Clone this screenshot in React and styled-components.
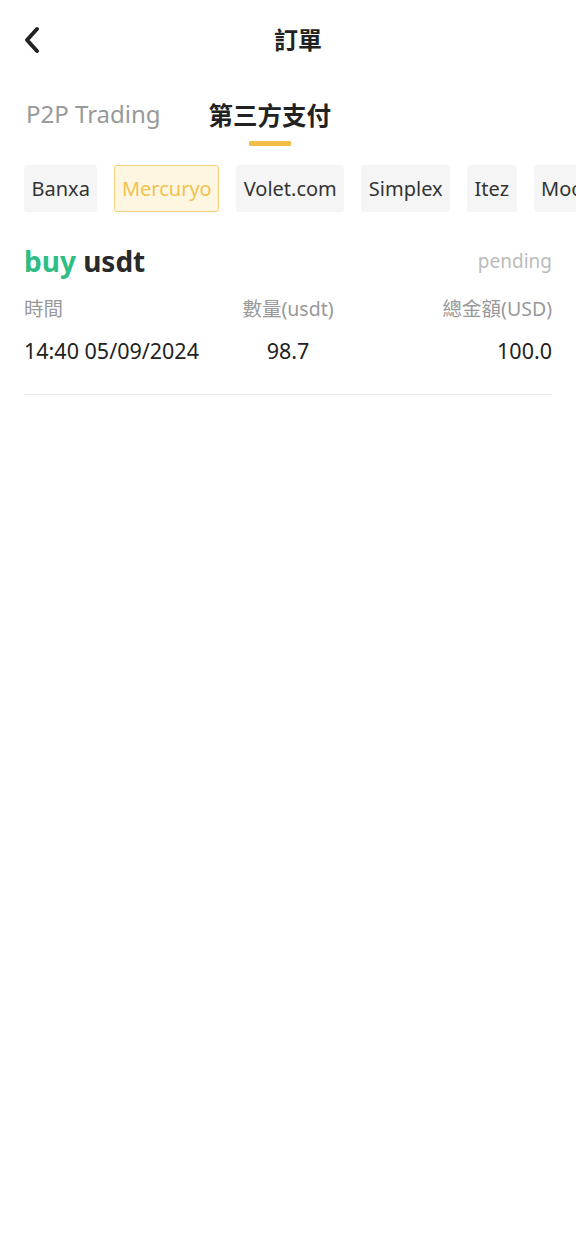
import styled, { createGlobalStyle } from "styled-components";

const GlobalStyle = createGlobalStyle`
  html, body {
    margin: 0;
    padding: 0;
    background: #fff;
  }
  body {
    font-family: "Noto Sans", "Noto Sans CJK TC", sans-serif;
    color: #222;
  }
`;

const Page = styled.div`
  width: 576px;
  min-height: 1234px;
  background: #fff;
  overflow: hidden;
`;

const NavBar = styled.div`
  height: 80px;
  display: grid;
  grid-template-columns: 60px 1fr 60px;
  align-items: center;
  padding: 0 0 0 16px;
  box-sizing: border-box;
`;

const BackButton = styled.button`
  width: 32px;
  height: 32px;
  padding: 0;
  border: 0;
  background: none;
  display: flex;
  align-items: center;
  justify-content: center;
`;

const Title = styled.h1`
  margin: 0 0 4px;
  text-align: center;
  font-size: 24px;
  font-weight: 700;
  color: #222;
  padding-left: 4px;
`;

const Tabs = styled.div`
  display: flex;
  gap: 48px;
  padding: 0 26px;
  height: 76px;
`;

const Tab = styled.div`
  display: flex;
  flex-direction: column;
  align-items: center;
  padding-top: 17px;
  font-size: ${(p) => (p.$active ? "24.5px" : "24px")};
  font-weight: ${(p) => (p.$active ? 600 : 400)};
  color: ${(p) => (p.$active ? "#222" : "#999")};
  &::after {
    content: "";
    width: 42px;
    height: 5px;
    margin-top: 9px;
    border-radius: 1px;
    background: ${(p) => (p.$active ? "#f3be47" : "transparent")};
  }
`;

const Chips = styled.div`
  display: flex;
  gap: 17px;
  padding: 9px 0 0 24px;
  overflow: hidden;
  white-space: nowrap;
`;

const Chip = styled.div`
  flex: none;
  height: 47px;
  padding: 0 6.5px;
  box-sizing: border-box;
  display: flex;
  align-items: center;
  border-radius: 3px;
  font-size: 20px;
  background: ${(p) => (p.$active ? "#fef6e0" : "#f5f5f5")};
  border: 1px solid ${(p) => (p.$active ? "#f2d27e" : "#f5f5f5")};
  color: ${(p) => (p.$active ? "#f0c24e" : "#333")};
`;

const Order = styled.div`
  margin: 0 24px;
  padding: 30px 0 29px;
  border-bottom: 1px solid #eee;
`;

const OrderHead = styled.div`
  display: flex;
  justify-content: space-between;
  align-items: center;
  margin-bottom: 13px;
`;

const OrderTitle = styled.div`
  font-size: 28px;
  font-weight: 700;
  color: #2a2a2a;
  span {
    color: #2ebd85;
  }
`;

const Status = styled.div`
  font-size: 19px;
  color: #bbb;
`;

const Grid = styled.div`
  display: grid;
  grid-template-columns: 1fr 1fr 1fr;
  row-gap: 14px;
  align-items: center;
`;

const Cell = styled.div`
  font-size: ${(p) => (p.$label ? "19.5px" : "21.5px")};
  color: ${(p) => (p.$label ? "#999" : "#222")};
  text-align: ${(p) => p.$align || "left"};
  white-space: nowrap;
`;

export default function App() {
  return (
    <Page>
      <GlobalStyle />
      <NavBar>
        <BackButton aria-label="back">
          <svg width="20" height="28" viewBox="0 0 20 28">
            <path
              d="M15 3 L5 14 L15 25"
              fill="none"
              stroke="#222"
              strokeWidth="4"
              strokeLinecap="round"
              strokeLinejoin="round"
            />
          </svg>
        </BackButton>
        <Title>訂單</Title>
        <div />
      </NavBar>
      <Tabs>
        <Tab>P2P Trading</Tab>
        <Tab $active>第三方支付</Tab>
      </Tabs>
      <Chips>
        <Chip>Banxa</Chip>
        <Chip $active>Mercuryo</Chip>
        <Chip>Volet.com</Chip>
        <Chip>Simplex</Chip>
        <Chip>Itez</Chip>
        <Chip>MoonPay</Chip>
      </Chips>
      <Order>
        <OrderHead>
          <OrderTitle>
            <span>buy</span> usdt
          </OrderTitle>
          <Status>pending</Status>
        </OrderHead>
        <Grid>
          <Cell $label>時間</Cell>
          <Cell $label $align="center">數量(usdt)</Cell>
          <Cell $label $align="right">總金額(USD)</Cell>
          <Cell>14:40 05/09/2024</Cell>
          <Cell $align="center">98.7</Cell>
          <Cell $align="right">100.0</Cell>
        </Grid>
      </Order>
    </Page>
  );
}
